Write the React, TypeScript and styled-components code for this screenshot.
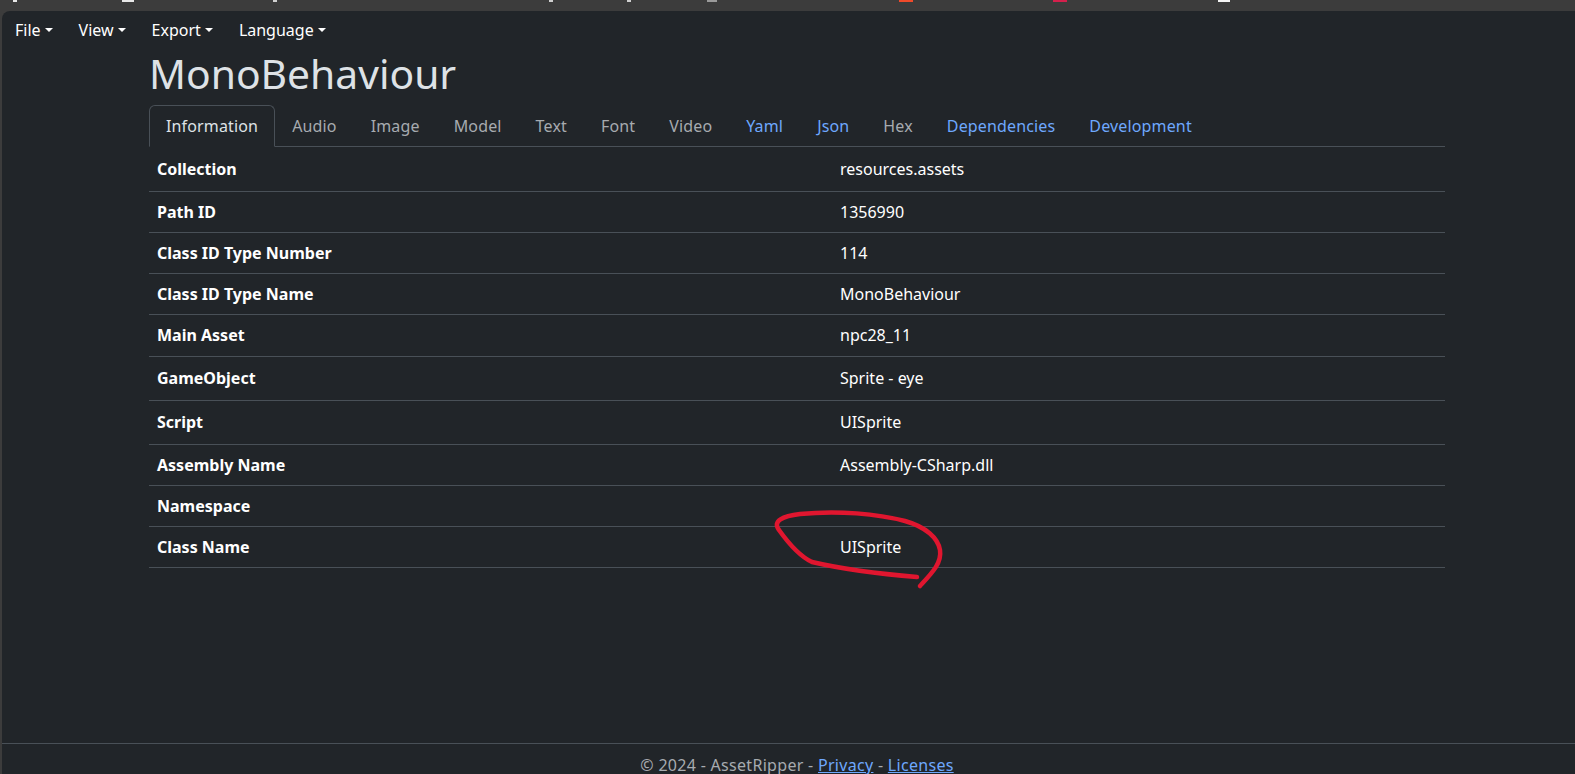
import React from 'react'
import styled, { createGlobalStyle } from 'styled-components'

const GlobalStyle = createGlobalStyle`
  html, body {
    margin: 0;
    padding: 0;
    background: #3c3c3c;
    overflow: hidden;
  }
  * { box-sizing: border-box; }
`

const FONT = `"Segoe UI", "Noto Sans", "Open Sans", Arial, sans-serif`

// [label, value, row height]
const rows: [string, string, number][] = [
  ['Collection', 'resources.assets', 44],
  ['Path ID', '1356990', 41],
  ['Class ID Type Number', '114', 41],
  ['Class ID Type Name', 'MonoBehaviour', 41],
  ['Main Asset', 'npc28_11', 42],
  ['GameObject', 'Sprite - eye', 44],
  ['Script', 'UISprite', 44],
  ['Assembly Name', 'Assembly-CSharp.dll', 41],
  ['Namespace', '', 41],
  ['Class Name', 'UISprite', 41],
]

const tabs: { label: string; kind: 'active' | 'muted' | 'link' }[] = [
  { label: 'Information', kind: 'active' },
  { label: 'Audio', kind: 'muted' },
  { label: 'Image', kind: 'muted' },
  { label: 'Model', kind: 'muted' },
  { label: 'Text', kind: 'muted' },
  { label: 'Font', kind: 'muted' },
  { label: 'Video', kind: 'muted' },
  { label: 'Yaml', kind: 'link' },
  { label: 'Json', kind: 'link' },
  { label: 'Hex', kind: 'muted' },
  { label: 'Dependencies', kind: 'link' },
  { label: 'Development', kind: 'link' },
]

const marks = [
  { x: 13, w: 4, c: '#e8e8e8' },
  { x: 122, w: 12, c: '#e8e8e8' },
  { x: 273, w: 4, c: '#d0d0d0' },
  { x: 549, w: 4, c: '#d0d0d0' },
  { x: 627, w: 4, c: '#d0d0d0' },
  { x: 707, w: 10, c: '#9a9a9a' },
  { x: 899, w: 14, c: '#f04a2a' },
  { x: 1053, w: 14, c: '#d4204c' },
  { x: 1218, w: 12, c: '#f4f4f4' },
]

export default function App() {
  return (
    <>
      <GlobalStyle />
      <TabStrip>
        {marks.map((m, i) => (
          <StripMark key={i} $w={m.w} $c={m.c} style={{ left: m.x }} />
        ))}
      </TabStrip>
      <Page>
        <NavBar>
          {['File', 'View', 'Export', 'Language'].map((item) => (
            <MenuItem key={item}>
              {item}
              <Caret />
            </MenuItem>
          ))}
        </NavBar>

        <Main>
          <Title>MonoBehaviour</Title>
          <Tabs>
            {tabs.map((t) => (
              <Tab key={t.label} $kind={t.kind}>{t.label}</Tab>
            ))}
          </Tabs>
          <Table>
            <tbody>
              {rows.map(([k, v, h]) => (
                <Row key={k} $h={h}>
                  <Label>{k}</Label>
                  <Value>{v}</Value>
                </Row>
              ))}
            </tbody>
          </Table>
        </Main>

        <Footer>
          <FooterInner>
            © 2024 - AssetRipper - <FooterLink>Privacy</FooterLink> - <FooterLink>Licenses</FooterLink>
          </FooterInner>
        </Footer>

        <Scribble width="1575" height="774" viewBox="0 0 1575 774">
          <path
            d="M917 577 C 880 574, 842 569, 812 562 C 799 556, 789 544, 779 530 C 772 521, 783 516, 800 514 C 838 510, 878 514, 905 521 C 926 527, 938 538, 940 550 C 942 563, 932 573, 920 586"
            fill="none"
            stroke="#e0162f"
            strokeWidth="4.5"
            strokeLinecap="round"
            strokeLinejoin="round"
          />
        </Scribble>
      </Page>
    </>
  )
}

const TabStrip = styled.div`
  position: relative;
  height: 11px;
  background: #3c3c3c;
`

const StripMark = styled.span<{ $w: number; $c: string }>`
  position: absolute;
  top: 0;
  width: ${(p) => p.$w}px;
  height: 2px;
  background: ${(p) => p.$c};
`

const Page = styled.div`
  position: relative;
  margin-left: 2px;
  height: 763px;
  background: #212529;
  border-top-left-radius: 8px;
  display: flex;
  flex-direction: column;
  overflow: hidden;
  font-family: ${FONT};
  color: #dee2e6;
`

const Scribble = styled.svg`
  position: absolute;
  left: -2px;
  top: -11px;
  pointer-events: none;
`

const NavBar = styled.nav`
  display: flex;
  align-items: center;
  gap: 26px;
  padding: 3px 0 0 13px;
  height: 35px;
`

const MenuItem = styled.div`
  display: flex;
  align-items: center;
  font-size: 16px;
  line-height: 24px;
  color: #ffffff;
`

const Caret = styled.span`
  display: inline-block;
  margin-left: 4px;
  width: 0;
  height: 0;
  border-top: 4.8px solid currentColor;
  border-left: 4px solid transparent;
  border-right: 4px solid transparent;
`

const Main = styled.main`
  flex: 1;
  width: 1443px;
  padding-left: 147px;
`

const Title = styled.h1`
  margin: 3px 0 8px;
  font-size: 40.8px;
  font-weight: 400;
  line-height: 48px;
  color: #dee2e6;
`

const Tabs = styled.div`
  display: flex;
  border-bottom: 1px solid #495057;
`

const Tab = styled.div<{ $kind: 'active' | 'muted' | 'link' }>`
  padding: 8px 16px;
  margin-bottom: -1px;
  font-size: 16px;
  line-height: 24px;
  letter-spacing: 0.15px;
  border: 1px solid transparent;
  border-top-left-radius: 6px;
  border-top-right-radius: 6px;
  color: ${(p) => (p.$kind === 'link' ? '#6ea8fe' : p.$kind === 'muted' ? '#a7abb0' : '#dee2e6')};
  ${(p) =>
    p.$kind === 'active' &&
    `
    background: #212529;
    border-color: #495057 #495057 #212529;
  `}
`

const Table = styled.table`
  width: 1296px;
  border-collapse: collapse;
  font-size: 16px;
  line-height: 24px;
  color: #ffffff;
`

const Row = styled.tr<{ $h: number }>`
  height: ${(p) => p.$h}px;
  border-bottom: 1px solid #495057;
`

const Label = styled.th`
  width: 683px;
  padding: 0 8px;
  text-align: left;
  font-weight: 700;
  vertical-align: middle;
`

const Value = styled.td`
  padding: 0 8px;
  vertical-align: middle;
`

const Footer = styled.footer`
  height: 31px;
  border-top: 1px solid #495057;
  padding-top: 9px;
  overflow: visible;
`

const FooterInner = styled.div`
  width: 1443px;
  padding-left: 147px;
  text-align: center;
  font-size: 16px;
  line-height: 24px;
  letter-spacing: 0.3px;
  color: #a7abb0;
`

const FooterLink = styled.span`
  color: #6ea8fe;
  text-decoration: underline;
`
